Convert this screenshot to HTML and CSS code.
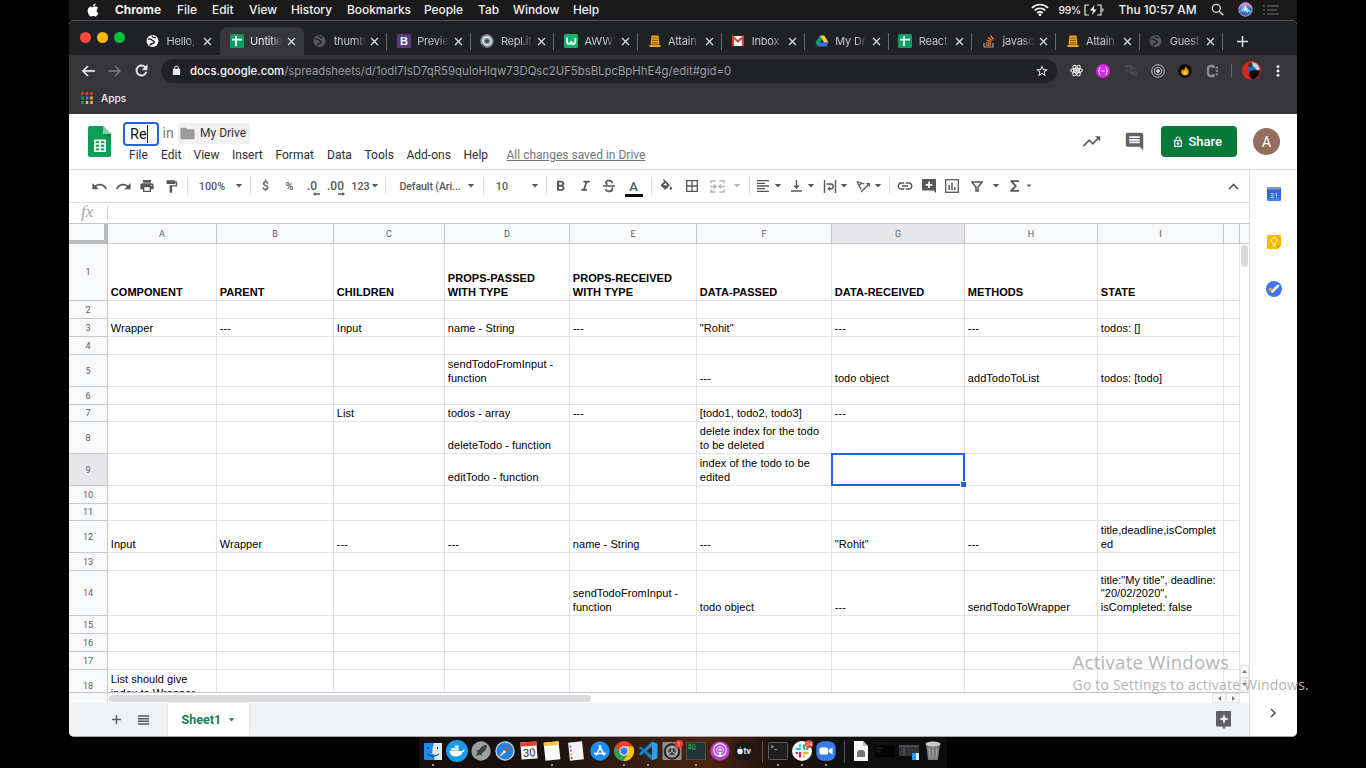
FILE: index.html
```html
<!DOCTYPE html>
<html lang="en">
<head>
<meta charset="utf-8">
<title>Untitled spreadsheet - Google Sheets</title>
<link rel="stylesheet" href="styles.css">
</head>
<body>
<svg class="defs" width="0" height="0">
  <symbol id="x" viewBox="0 0 10 10"><path d="M1.2 1.2l7.600 7.600M8.800 1.200l-7.600 7.600" stroke="currentColor" stroke-width="1.500" fill="none"/></symbol>
  <symbol id="dd" viewBox="0 0 8 4"><path d="M.8 0h6.4L4 3.6z" fill="currentColor"/></symbol>
  <symbol id="globe" viewBox="0 0 24 24"><circle cx="12" cy="12" r="11" fill="currentColor"/><path d="M4 9c4-2 6 0 8 2 3 1 4 3 2 5-2 1-5 1-7 4" stroke="#202124" stroke-width="2.800" fill="none"/><path d="M11 2c0 3 3 4 7 4" stroke="#202124" stroke-width="2.400" fill="none"/></symbol>
  <symbol id="sheet" viewBox="0 0 14 14"><rect width="14" height="14" rx="1.5" fill="#0f9d67"/><path d="M6 2v10M2 5.6h10" stroke="#fff" stroke-width="1.8"/></symbol>
  <symbol id="attain" viewBox="0 0 14 14"><path d="M3.500 1.500h7l1 9h-9z" fill="#f5a70c"/><path d="M1.500 12h11" stroke="#f5a70c" stroke-width="2"/><path d="M4.500 4h5M4.200 6.400h5.600M4 8.800h6" stroke="#6b4708" stroke-width=".9"/></symbol>
</svg>

<header class="macbar">
  <nav class="macmenu">
    <span><svg width="12" height="14" viewBox="1 0 22 24"><path fill="#fff" d="M12.152 6.896c-.948 0-2.415-1.078-3.96-1.04-2.04.027-3.91 1.183-4.961 3.014-2.117 3.675-.546 9.103 1.519 12.09 1.013 1.454 2.208 3.09 3.792 3.039 1.52-.065 2.09-.987 3.935-.987 1.831 0 2.35.987 3.96.948 1.637-.026 2.676-1.48 3.676-2.948 1.156-1.688 1.636-3.325 1.662-3.415-.039-.013-3.182-1.221-3.22-4.857-.026-3.04 2.48-4.494 2.597-4.559-1.429-2.09-3.623-2.324-4.39-2.376-2-.156-3.675 1.09-4.61 1.09zM15.53 3.83c.843-1.012 1.4-2.427 1.245-3.83-1.207.052-2.662.805-3.532 1.818-.78.896-1.454 2.338-1.273 3.714 1.338.104 2.715-.688 3.559-1.701"/></svg></span>
    <b>Chrome</b><span>File</span><span>Edit</span><span>View</span><span>History</span><span>Bookmarks</span><span>People</span><span>Tab</span><span>Window</span><span>Help</span>
    <span><svg width="18" height="13" viewBox="0 0 18 13" fill="none" stroke="#fff" stroke-width="1.7"><path d="M1 4.8c4.6-4.400 11.400-4.400 16 0M3.700 7.400c3-2.900 7.600-2.900 10.600 0M6.200 9.900c1.600-1.500 4-1.500 5.600 0"/><circle cx="9" cy="11.600" r=".6"/></svg></span>
    <span class="pct">99%</span>
    <span><svg width="20" height="12" viewBox="0 0 20 12" fill="none" stroke="#e6e6e6" stroke-width="1.200"><path d="M5 1H1v10h4M13 1h4v10h-4M18.800 4.500v3"/><path d="M10.500 1L6 6.600h3L8 11l4.500-5.600h-3z" fill="#fff" stroke="none"/></svg></span>
    <span class="clock">Thu 10:57 AM</span>
    <span><svg width="13" height="13" viewBox="0 0 13 13" fill="none" stroke="#e0e0e0" stroke-width="1.300"><circle cx="5.300" cy="5.300" r="4"/><path d="M8.300 8.300l4 4"/></svg></span>
    <span><svg width="15" height="15" viewBox="0 0 15 15"><circle cx="7.500" cy="7.500" r="7" fill="#3d64b8"/><path d="M1 7a6.500 6.500 0 0 1 13 0c-3-3-9-4-13 0" fill="#d77ac6"/><path d="M2 10c2-6 5-8 6-6s4 3 5 7c-3-2-8-3-11-1" fill="#5fd0ea"/><path d="M7.500 3l-2 8 2-3 3 4z" fill="#fff"/><circle cx="7.500" cy="7.500" r="6.700" fill="none" stroke="#b9bdd4" stroke-width=".7"/></svg></span>
    <span><svg width="16" height="10" viewBox="0 0 16 10" stroke="#737373" stroke-width="1.200"><path d="M0 1h2M4 1h12M0 5h2M4 5h10M0 9h2M4 9h12"/></svg></span>
  </nav>
</header>

<main class="window">
  <div class="tabstrip">
    <div class="lights"><i></i><i></i><i></i></div>
    <div class="tab nosep"><svg class="fav white"><use href="#globe"/></svg><span>Hello,</span><svg class="cl"><use href="#x"/></svg></div>
    <div class="tab active"><svg class="fav"><use href="#sheet"/></svg><span>Untitle</span><svg class="cl"><use href="#x"/></svg></div>
    <div class="tab"><svg class="fav dim"><use href="#globe"/></svg><span>thumb</span><svg class="cl"><use href="#x"/></svg></div>
    <div class="tab"><svg class="fav" viewBox="0 0 14 14"><rect width="14" height="14" rx="1.500" fill="#563d7c"/><text x="7" y="11" text-anchor="middle" font-size="11" font-weight="700" fill="#fff">B</text></svg><span>Previe</span><svg class="cl"><use href="#x"/></svg></div>
    <div class="tab"><svg class="fav" viewBox="0 0 14 14"><circle cx="7" cy="7" r="6.700" fill="#8b979e"/><circle cx="7" cy="7" r="4" fill="none" stroke="#eef2f4" stroke-width="1.300"/><circle cx="7" cy="7" r="1.800" fill="#354148"/><path d="M2 10l3 3M10 1l3 4" stroke="#414c53"/></svg><span>Repl.it</span><svg class="cl"><use href="#x"/></svg></div>
    <div class="tab"><svg class="fav" viewBox="0 0 14 14"><rect width="14" height="14" rx="1.500" fill="#12b26b"/><path d="M3 3.500v3.500q0 3 2 3t2.300-3q0 3 2 3t2-3.500V4" fill="none" stroke="#fff" stroke-width="1.900"/></svg><span>AWW</span><svg class="cl"><use href="#x"/></svg></div>
    <div class="tab"><svg class="fav"><use href="#attain"/></svg><span>Attain</span><svg class="cl"><use href="#x"/></svg></div>
    <div class="tab"><svg class="fav" viewBox="0 0 14 14"><rect x="1" y="2" width="12" height="10" rx="1" fill="#f4f4f4"/><path d="M2 12V3l5 4.500L12 3v9" fill="none" stroke="#dd3b2f" stroke-width="2"/></svg><span>Inbox</span><svg class="cl"><use href="#x"/></svg></div>
    <div class="tab"><svg class="fav" viewBox="0 0 14 14"><path d="M4.800 1.500h4.400l4.300 7H9z" fill="#ffcf48"/><path d="M4.800 1.500L.5 8.700l2.200 3.800L7 5z" fill="#12a261"/><path d="M4.900 8.500h8.600l-2.200 4H2.700z" fill="#3777e3"/></svg><span>My Dr</span><svg class="cl"><use href="#x"/></svg></div>
    <div class="tab"><svg class="fav"><use href="#sheet"/></svg><span>React</span><svg class="cl"><use href="#x"/></svg></div>
    <div class="tab"><svg class="fav" viewBox="0 0 14 14" fill="none"><path d="M2 9v4h9V9" stroke="#a4a6a8" stroke-width="1.200"/><path d="M4 11h5M4 8.700l5 .6M4.700 6.200l4.700 1.600M6 3.500l4.300 3M8.500 1.500l3 4" stroke="#ef7224" stroke-width="1.300"/></svg><span>javasc</span><svg class="cl"><use href="#x"/></svg></div>
    <div class="tab"><svg class="fav"><use href="#attain"/></svg><span>Attain</span><svg class="cl"><use href="#x"/></svg></div>
    <div class="tab"><svg class="fav dim"><use href="#globe"/></svg><span>Guest</span><svg class="cl"><use href="#x"/></svg></div>
    <svg class="newtab" width="11" height="11" viewBox="0 0 11 11"><path d="M5.500 0v11M0 5.500h11" stroke="#dfe1e4" stroke-width="1.500"/></svg>
  </div>

  <div class="navbar">
    <svg width="16" height="16" viewBox="0 0 24 24" fill="#eceef0"><path d="M22 11H6.830l5.590-5.590L11 4l-8 8 8 8 1.410-1.410L6.830 13H22v-2z" stroke="#eceef0" stroke-width=".6"/></svg>
    <svg width="16" height="16" viewBox="0 0 24 24" fill="#7d7f83"><path d="M2 11h15.170l-5.590-5.590L13 4l8 8-8 8-1.410-1.410L17.170 13H2z"/></svg>
    <svg width="17" height="17" viewBox="0 0 24 24" fill="#eceef0"><path stroke="#eceef0" stroke-width=".7" d="M17.650 6.350C16.200 4.900 14.210 4 12 4c-4.420 0-7.990 3.580-7.990 8s3.570 8 7.990 8c3.730 0 6.840-2.550 7.730-6h-2.080c-.82 2.330-3.040 4-5.650 4-3.310 0-6-2.690-6-6s2.690-6 6-6c1.660 0 3.140.69 4.220 1.780L13 11h7V4l-2.350 2.350z"/></svg>
    <div class="omnibox">
      <svg width="11" height="11" viewBox="0 0 24 24" fill="#e8eaed"><path d="M18 8h-1V6c0-2.760-2.240-5-5-5S7 3.240 7 6v2H6c-1.100 0-2 .9-2 2v10c0 1.100.9 2 2 2h12c1.100 0 2-.9 2-2V10c0-1.100-.9-2-2-2zm-9-2c0-1.660 1.340-3 3-3s3 1.340 3 3v2H9V6z"/></svg>
      <span class="url"><b>docs.google.com</b>/spreadsheets/d/1odI7IsD7qR59quIoHIqw73DQsc2UF5bsBLpcBpHhE4g/edit#gid=0</span>
      <svg width="14" height="14" viewBox="0 0 24 24" fill="#e8eaed"><path d="M22 9.240l-7.190-.62L12 2 9.190 8.630 2 9.240l5.460 4.730L5.820 21 12 17.270 18.180 21l-1.630-7.030L22 9.240zM12 15.400l-3.760 2.270 1-4.280-3.320-2.880 4.380-.38L12 6.100l1.710 4.040 4.380.38-3.320 2.880 1 4.280L12 15.400z"/></svg>
    </div>
    <div class="exts">
      <span><svg width="13" height="13" viewBox="0 0 14 14" fill="none" stroke="#eee" stroke-width="1.100"><ellipse cx="7" cy="7" rx="6.300" ry="2.500"/><ellipse cx="7" cy="7" rx="6.300" ry="2.500" transform="rotate(60 7 7)"/><ellipse cx="7" cy="7" rx="6.300" ry="2.500" transform="rotate(120 7 7)"/><circle cx="7" cy="7" r="1" fill="#fff"/></svg></span>
      <span><svg width="14" height="14" viewBox="0 0 14 14" fill="none" stroke="#fff"><circle cx="7" cy="7" r="7" fill="#d626e8" stroke="none"/><path d="M4.500 3.500q-1.500 0-1.200 2 0 1.500-1 1.500 1 0 1 1.500-.3 2 1.200 2M9.500 3.500q1.500 0 1.200 2 0 1.500 1 1.500-1 0-1 1.500.3 2-1.200 2M5.300 7h3.400"/></svg></span>
      <span><svg width="13" height="13" viewBox="0 0 13 13" fill="none" stroke="#4c4d50" stroke-width="1.300"><path d="M1 2h6v5H2zM4 4.500h6M5 9h5V5M8 8v3h4V8"/></svg></span>
      <span><svg width="14" height="14" viewBox="0 0 14 14" fill="none" stroke="#b6b7b9"><circle cx="7" cy="7" r="6.300"/><circle cx="7" cy="7" r="3.800"/><circle cx="7" cy="7" r="1.500" fill="#ddd"/></svg></span>
      <span><svg width="14" height="14" viewBox="0 0 14 14"><circle cx="7" cy="7" r="6.700" fill="#080808"/><path d="M7.500 2c.3 2 3.500 3 3.300 6.200-.2 2-1.800 3.300-3.800 3.300S3.200 10 3.200 8.200C3.200 6.500 4 6 4.500 5c.7.500.8 1 .9 1.500C6.500 5.500 7.500 4 7.500 2z" fill="#fb9700"/><circle cx="7.200" cy="9" r="1.800" fill="#ffd02e"/></svg></span>
      <span><svg width="13" height="14" viewBox="0 0 13 14" fill="none" stroke="#8a8b8e" stroke-width="2.300"><path d="M7.500 4V2H5Q2 2 2 5v4q0 3 3 3h2.500v-2"/><path d="M9.800 3.500h2.200M9.800 7h2.200M9.800 10.500h2.200" stroke-width="1.800"/></svg></span>
      <i class="vbar"></i>
      <span><svg width="19" height="19" viewBox="0 0 19 19"><circle cx="9.500" cy="9.500" r="9.500" fill="#d8281e"/><path d="M10 1l5 2 3 5-4 2-4-4z" fill="#b7d9ee"/><path d="M6 6l5-1 4 4-3 2-6-1z" fill="#2368b8"/><circle cx="8.500" cy="4" r="2.200" fill="#532a1e"/><path d="M8 10l5-1 5 1a9.500 9.500 0 0 1-8 8.500l-3-4z" fill="#050507"/></svg></span>
      <span><svg width="4" height="14" viewBox="0 0 4 14" fill="#fff"><circle cx="2" cy="2.700" r="1.400"/><circle cx="2" cy="7" r="1.400"/><circle cx="2" cy="11.300" r="1.400"/></svg></span>
    </div>
  </div>
  <div class="bookmarks">
    <svg width="12" height="12" viewBox="0 0 12 12"><path d="M1.500 0v3M6 0v3M10.500 0v3" stroke="#e33b2e" stroke-width="2.600"/><path d="M1.500 4.500v3" stroke="#1e9e5a" stroke-width="2.600"/><path d="M6 4.500v3" stroke="#3b7de9" stroke-width="2.600"/><path d="M10.500 4.500v3M6 9v3M10.500 9v3" stroke="#f2b632" stroke-width="2.600"/><path d="M1.500 9v3" stroke="#1e9e5a" stroke-width="2.600"/></svg>
    <span>Apps</span>
  </div>

  <section class="head">
    <svg class="logo" width="23" height="31" viewBox="0 0 23 31"><path d="M2 0h13l8 8v21q0 2-2 2H2q-2 0-2-2V2q0-2 2-2z" fill="#0f9d58"/><path d="M15 0l8 8h-8z" fill="#87ceac"/><path d="M15 8h8v6z" fill="#0b8a4c"/><path d="M6 13.500h12v12.500H6zM7.800 15.200v1.900h3.300v-1.900zM12.900 15.200v1.900h3.300v-1.900zM7.800 18.800v1.900h3.300v-1.900zM12.900 18.800v1.900h3.300v-1.900zM7.800 22.400v1.900h3.300v-1.900zM12.900 22.400v1.900h3.300v-1.900z" fill="#f1f1f1" fill-rule="evenodd"/></svg>
    <div class="doc">
      <div class="titlerow"><span class="rename">Re<i></i></span><span class="in">in</span><span class="chip"><svg width="17" height="17" viewBox="0 0 24 24" fill="#9a9b9d"><path d="M10 4H4c-1.100 0-2 .9-2 2v12c0 1.100.9 2 2 2h16c1.100 0 2-.9 2-2V8c0-1.100-.9-2-2-2h-8l-2-2z"/></svg>My Drive</span></div>
      <nav class="menus"><span>File</span><span>Edit</span><span>View</span><span>Insert</span><span>Format</span><span>Data</span><span>Tools</span><span>Add-ons</span><span>Help</span><u>All changes saved in Drive</u></nav>
    </div>
    <div class="actions">
      <svg width="21" height="21" viewBox="0 0 24 24" fill="#5f6368"><path d="M16 6l2.290 2.290-4.880 4.880-4-4L2 16.590 3.410 18l6-6 4 4 6.300-6.290L22 12V6z"/></svg>
      <svg width="21" height="21" viewBox="0 0 24 24" fill="#5f6368"><path d="M21.990 4c0-1.100-.89-2-1.990-2H4c-1.100 0-2 .9-2 2v12c0 1.100.9 2 2 2h14l4 4-.01-18zM18 14H6v-2h12v2zm0-3H6V9h12v2zm0-3H6V6h12v2z"/></svg>
      <div class="share"><svg width="12" height="12" viewBox="0 0 24 24" fill="#fff"><path fill-rule="evenodd" d="M18 8h-1V6c0-2.760-2.240-5-5-5S7 3.240 7 6v2H6c-1.100 0-2 .9-2 2v10c0 1.100.9 2 2 2h12c1.100 0 2-.9 2-2V10c0-1.100-.9-2-2-2zM9 6c0-1.660 1.340-3 3-3s3 1.340 3 3v2H9V6zM6.500 10.500h11v9h-11z"/><circle cx="12" cy="15" r="2.600"/></svg>Share</div>
      <div class="avatar">A</div>
    </div>
  </section>

  <section class="body">
    <div class="left">
      <div class="tools">
        <span><svg width="17" height="17" viewBox="0 0 24 24"><path d="M12.500 8c-2.650 0-5.050.99-6.900 2.600L2 7v9h9l-3.620-3.620c1.390-1.160 3.160-1.880 5.120-1.880 3.540 0 6.550 2.310 7.600 5.500l2.370-.78C21.080 11.030 17.150 8 12.500 8z"/></svg></span>
        <span><svg width="17" height="17" viewBox="0 0 24 24"><path d="M18.400 10.600C16.550 8.990 14.150 8 11.500 8c-4.650 0-8.580 3.030-9.960 7.220L3.900 16c1.050-3.190 4.050-5.500 7.600-5.500 1.950 0 3.730.72 5.120 1.880L13 16h9V7l-3.600 3.600z"/></svg></span>
        <span><svg width="16" height="16" viewBox="0 0 24 24"><path d="M19 8H5c-1.660 0-3 1.340-3 3v6h4v4h12v-4h4v-6c0-1.660-1.340-3-3-3zm-3 11H8v-5h8v5zm3-7c-.55 0-1-.45-1-1s.45-1 1-1 1 .45 1 1-.45 1-1 1zm-1-9H6v4h12V3z"/></svg></span>
        <span><svg width="15" height="15" viewBox="0 0 24 24"><path d="M18 4V3c0-.55-.45-1-1-1H5c-.55 0-1 .45-1 1v4c0 .55.45 1 1 1h12c.55 0 1-.45 1-1V6h1v4H9v11c0 .55.45 1 1 1h2c.55 0 1-.45 1-1v-9h8V4h-3z"/></svg></span>
        <i class="sep"></i>
        <span>100%</span>
        <span><svg class="dd"><use href="#dd"/></svg></span>
        <i class="sep"></i>
        <span class="cur">$</span>
        <span>%</span>
        <span class="dec">.0<svg width="7" height="4" viewBox="0 0 7 4"><path d="M0 2l2.500-2v1.300H7v1.400H2.500V4z"/></svg></span>
        <span class="dec">.00<svg width="7" height="4" viewBox="0 0 7 4"><path d="M7 2L4.500 0v1.300H0v1.400h4.500V4z"/></svg></span>
        <span class="big">123<svg class="dd"><use href="#dd"/></svg></span>
        <i class="sep"></i>
        <span class="font">Default (Ari...</span>
        <span><svg class="dd"><use href="#dd"/></svg></span>
        <i class="sep"></i>
        <span>10</span>
        <span><svg class="dd"><use href="#dd"/></svg></span>
        <i class="sep"></i>
        <span><svg width="17" height="17" viewBox="0 0 24 24"><path d="M15.600 10.790c.97-.67 1.650-1.770 1.650-2.790 0-2.260-1.750-4-4-4H7v14h7.040c2.090 0 3.710-1.700 3.710-3.790 0-1.520-.86-2.820-2.150-3.420zM10 6.500h3c.83 0 1.500.67 1.500 1.500s-.67 1.500-1.500 1.500h-3v-3zm3.500 9H10v-3h3.500c.83 0 1.500.67 1.500 1.500s-.67 1.500-1.500 1.500z"/></svg></span>
        <span><svg width="17" height="17" viewBox="0 0 24 24"><path d="M9 4v2.500h3l-3.300 9H6V18h8v-2.500h-2.700l3.300-9H18V4z"/></svg></span>
        <span><svg width="16" height="16" viewBox="0 0 24 24" fill="none" stroke="#55585c"><path d="M3 12h18" stroke-width="2"/><path d="M17 8q0-4-5-4-4.500 0-4.500 3.200 0 2 2.500 2.800M7 16.500q.5 3.500 5.200 3.500 4.800 0 4.800-3.500 0-1.200-.8-2" stroke-width="2.600"/></svg></span>
        <span class="fc">A</span>
        <i class="sep"></i>
        <span><svg width="15" height="15" viewBox="0 0 24 24"><path d="M16.560 8.940L7.620 0 6.210 1.410l2.380 2.380-5.150 5.150c-.59.59-.59 1.540 0 2.120l5.500 5.500c.29.290.68.440 1.060.440s.77-.15 1.060-.44l5.500-5.500c.59-.58.59-1.530 0-2.120zM7 10L10 6.500 13.500 10H7zM19 11.500s-2 2.170-2 3.500c0 1.100.9 2 2 2s2-.9 2-2c0-1.330-2-3.500-2-3.500z"/></svg></span>
        <span><svg width="16" height="16" viewBox="0 0 24 24"><path d="M3 3v18h18V3H3zm8 16H5v-6h6v6zm0-8H5V5h6v6zm8 8h-6v-6h6v6zm0-8h-6V5h6v6z"/></svg></span>
        <span class="off"><svg width="15" height="13" viewBox="0 0 15 13" fill="none" stroke="#b4b6b8" stroke-width="1.500"><path d="M5.500 1H1v2.500M9.500 1H14v2.500M1 9.500V12h4.500M14 9.500V12H9.500M0 6.500h5M15 6.500h-5M4 4.500l2 2-2 2M11 4.500l-2 2 2 2"/></svg></span>
        <span class="off"><svg class="dd"><use href="#dd"/></svg></span>
        <i class="sep"></i>
        <span><svg width="16" height="16" viewBox="0 0 24 24"><path d="M15 15H3v2h12v-2zm0-8H3v2h12V7zM3 13h18v-2H3v2zm0 8h18v-2H3v2zM3 3v2h18V3H3z"/></svg></span>
        <span><svg class="dd"><use href="#dd"/></svg></span>
        <span><svg width="11" height="12" viewBox="0 0 11 12"><path d="M4.800 0h1.400v5.500h2.500L5.500 9 2.300 5.500h2.500zM0 10.200h11v1.500H0z"/></svg></span>
        <span><svg class="dd"><use href="#dd"/></svg></span>
        <span><svg width="14" height="13" viewBox="0 0 14 13" fill="none" stroke="#55585c" stroke-width="1.400"><path d="M1.500 0v13M12.500 0v13M3.500 4h4.300a2.300 2.300 0 0 1 0 4.800H6"/><path d="M7 6.500v4.600L4.200 8.800z" fill="#55585c" stroke="none"/></svg></span>
        <span><svg class="dd"><use href="#dd"/></svg></span>
        <span><svg width="15" height="13" viewBox="0 0 15 13" fill="none" stroke="#55585c" stroke-width="1.300"><path d="M1 1.500l4 8M1 1.500l7.500 2.500M3 5.800l3-3M5 12l7.500-7.500"/><path d="M9.800 3h4v4z" fill="#55585c" stroke="none"/></svg></span>
        <span><svg class="dd"><use href="#dd"/></svg></span>
        <i class="sep"></i>
        <span><svg width="18" height="18" viewBox="0 0 24 24"><path d="M3.900 12c0-1.710 1.390-3.100 3.100-3.100h4V7H7c-2.760 0-5 2.240-5 5s2.240 5 5 5h4v-1.900H7c-1.710 0-3.100-1.390-3.100-3.100zM8 13h8v-2H8v2zm9-6h-4v1.900h4c1.710 0 3.100 1.390 3.100 3.100s-1.390 3.100-3.100 3.100h-4V17h4c2.760 0 5-2.240 5-5s-2.240-5-5-5z"/></svg></span>
        <span><svg width="14" height="14" viewBox="0 0 14 14"><path d="M0 0h14v14l-2.500-2.500H0z"/><path d="M7 2.500v6.600M3.700 5.800h6.600" stroke="#fff" stroke-width="1.700"/></svg></span>
        <span><svg width="14" height="14" viewBox="0 0 14 14" fill="none" stroke="#55585c" stroke-width="1.300"><rect x=".7" y=".7" width="12.600" height="12.600"/><path d="M4.200 6v5M7 3.500V11M9.800 8v3" stroke-width="1.500"/></svg></span>
        <span><svg width="12" height="11" viewBox="0 0 12 11" fill="none" stroke="#55585c" stroke-width="1.500"><path d="M.8 1h10.400L7 6.200V10H5V6.200z"/></svg></span>
        <span><svg class="dd"><use href="#dd"/></svg></span>
        <span><svg width="16" height="16" viewBox="0 0 24 24"><path d="M18 3.500H5v2l6.500 6.500L5 18.500v2h13V18H9.500l5.500-6-5.500-6H18z"/></svg></span>
        <span><svg class="dd sm"><use href="#dd"/></svg></span>
        <span><svg width="11" height="7" viewBox="0 0 11 7"><path d="M1 6l4.500-4.500L10 6" fill="none" stroke="#55585c" stroke-width="1.700"/></svg></span>
      </div>
      <div class="formula"><span>fx</span></div>
      <div class="gridarea">
        <div class="sheet">
          <table>
            <colgroup><col class="c0"><col class="ca"><col class="cb"><col class="cc"><col class="cd"><col class="ce"><col class="cf"><col class="cg"><col class="ch"><col class="ci"><col class="cj"></colgroup>
            <thead><tr><th class="corner"></th><th>A</th><th>B</th><th>C</th><th>D</th><th>E</th><th>F</th><th class="hot">G</th><th>H</th><th>I</th><th></th></tr></thead>
            <tbody>
              <tr class="h57 titles"><th>1</th><td>COMPONENT</td><td>PARENT</td><td>CHILDREN</td><td>PROPS-PASSED<br>WITH TYPE</td><td>PROPS-RECEIVED<br>WITH TYPE</td><td>DATA-PASSED</td><td>DATA-RECEIVED</td><td>METHODS</td><td>STATE</td><td></td></tr>
              <tr class="h18"><th>2</th><td></td><td></td><td></td><td></td><td></td><td></td><td></td><td></td><td></td><td></td></tr>
              <tr class="h18"><th>3</th><td>Wrapper</td><td>---</td><td>Input</td><td>name - String</td><td>---</td><td>"Rohit"</td><td>---</td><td>---</td><td>todos: []</td><td></td></tr>
              <tr class="h18"><th>4</th><td></td><td></td><td></td><td></td><td></td><td></td><td></td><td></td><td></td><td></td></tr>
              <tr class="h32"><th>5</th><td></td><td></td><td></td><td>sendTodoFromInput -<br>function</td><td></td><td>---</td><td>todo object</td><td>addTodoToList</td><td>todos: [todo]</td><td></td></tr>
              <tr class="h18"><th>6</th><td></td><td></td><td></td><td></td><td></td><td></td><td></td><td></td><td></td><td></td></tr>
              <tr class="h17"><th>7</th><td></td><td></td><td>List</td><td>todos - array</td><td>---</td><td>[todo1, todo2, todo3]</td><td>---</td><td></td><td></td><td></td></tr>
              <tr class="h32"><th>8</th><td></td><td></td><td></td><td>deleteTodo - function</td><td></td><td>delete index for the todo<br>to be deleted</td><td></td><td></td><td></td><td></td></tr>
              <tr class="h32"><th class="hot">9</th><td></td><td></td><td></td><td>editTodo - function</td><td></td><td>index of the todo to be<br>edited</td><td class="selected"></td><td></td><td></td><td></td></tr>
              <tr class="h18"><th>10</th><td></td><td></td><td></td><td></td><td></td><td></td><td></td><td></td><td></td><td></td></tr>
              <tr class="h17"><th>11</th><td></td><td></td><td></td><td></td><td></td><td></td><td></td><td></td><td></td><td></td></tr>
              <tr class="h32"><th>12</th><td>Input</td><td>Wrapper</td><td>---</td><td>---</td><td>name - String</td><td>---</td><td>"Rohit"</td><td>---</td><td>title,deadline,isComplet<br>ed</td><td></td></tr>
              <tr class="h18"><th>13</th><td></td><td></td><td></td><td></td><td></td><td></td><td></td><td></td><td></td><td></td></tr>
              <tr class="h45"><th>14</th><td></td><td></td><td></td><td></td><td>sendTodoFromInput -<br>function</td><td>todo object</td><td>---</td><td>sendTodoToWrapper</td><td>title:"My title", deadline:<br>"20/02/2020",<br>isCompleted: false</td><td></td></tr>
              <tr class="h18"><th>15</th><td></td><td></td><td></td><td></td><td></td><td></td><td></td><td></td><td></td><td></td></tr>
              <tr class="h18"><th>16</th><td></td><td></td><td></td><td></td><td></td><td></td><td></td><td></td><td></td><td></td></tr>
              <tr class="h18"><th>17</th><td></td><td></td><td></td><td></td><td></td><td></td><td></td><td></td><td></td><td></td></tr>
              <tr class="h32"><th>18</th><td>List should give<br>index to Wrapper</td><td></td><td></td><td></td><td></td><td></td><td></td><td></td><td></td><td></td></tr>
            </tbody>
          </table>
        </div>
        <div class="vscroll"><i class="vhead"></i><i class="vthumb"></i><span class="arrow"><svg width="5" height="3" viewBox="0 0 5 3"><path d="M0 3L2.500 0 5 3z"/></svg></span><span class="arrow"><svg width="5" height="3" viewBox="0 0 5 3"><path d="M0 0h5L2.500 3z"/></svg></span></div>
      </div>
      <div class="hscroll"><i class="gut"></i><i class="hthumb"></i><span class="arrow"><svg width="3" height="5" viewBox="0 0 3 5"><path d="M3 0v5L0 2.500z"/></svg></span><span class="arrow"><svg width="3" height="5" viewBox="0 0 3 5"><path d="M0 0v5l3-2.500z"/></svg></span></div>
      <footer class="sheets">
        <svg width="11" height="11" viewBox="0 0 11 11"><path d="M5.500 1v9M1 5.500h9" stroke="#55585c" stroke-width="1.500"/></svg>
        <svg width="11" height="10" viewBox="0 0 11 10"><path d="M0 1h11M0 3.700h11M0 6.300h11M0 9h11" stroke="#55585c" stroke-width="1.400"/></svg>
        <div class="stab">Sheet1<svg class="dd"><use href="#dd"/></svg></div>
        <svg class="explore" width="16" height="18" viewBox="0 0 16 18"><path d="M1 0h14v15.500h-5L8 18l-2-2.500H1Q0 15 0 14V1q0-1 1-1z" fill="#5f6164"/><path d="M8 3l1.200 3.800L13 8l-3.800 1.200L8 13 6.800 9.200 3 8l3.800-1.200z" fill="#fff"/></svg>
      </footer>
    </div>
    <aside class="side">
      <svg width="14" height="15" viewBox="0 0 14 15"><rect width="14" height="14" rx="1" fill="#4285f4"/><rect x="1" width="12" height="3.500" fill="#8b95b5"/><rect y="2.500" width="14" height="9" fill="#3367d6"/><text x="7" y="10.500" text-anchor="middle" font-size="7.500" fill="#dfe8fb">31</text></svg>
      <svg width="14" height="14" viewBox="0 0 14 14"><path d="M1 0h12q1 0 1 1v9.500L10.500 14H1q-1 0-1-1V1q0-1 1-1z" fill="#fbb90a"/><path d="M14 10.500h-3.500V14z" fill="#e0930b"/><path d="M5.800 9V7.800a2.700 2.700 0 1 1 2.600 0V9zM5.600 10.700h3" fill="none" stroke="#fff3cd"/></svg>
      <svg width="16" height="16" viewBox="0 0 16 16"><circle cx="8" cy="8" r="8" fill="#4076ea"/><path d="M6.300 10.500l5.700-5.700" stroke="#fff" stroke-width="2.600" stroke-linecap="round"/><circle cx="4.300" cy="8.300" r="1.500" fill="#f6b62b"/></svg>
      <svg class="expand" width="7" height="10" viewBox="0 0 7 10"><path d="M1 1l4 4-4 4" stroke="#55585c" stroke-width="1.600" fill="none"/></svg>
    </aside>
  </section>
</main>

<footer class="dockwrap">
  <div class="dock">
    <span class="on"><svg viewBox="0 0 20 20"><rect x="1" y="2" width="18" height="17" rx="1" fill="#1f8df0"/><path d="M11 2h8v17h-7q-1-3-1-6H9q0-6 2-11z" fill="#dfe9f2"/><path d="M5 6v2M14.500 6v2M4 13q6 4.500 12 0" stroke="#12395e" fill="none"/></svg></span>
    <span><svg class="lg" viewBox="0 0 20 20"><circle cx="10" cy="10" r="10" fill="#189be8"/><path d="M3 10h12q1-2 2-1-.5 2-2 2-1 4-6 4t-6-5zM4.500 7.500h7V9.500h-7zM8 5h3.500v2H8z" fill="#fff"/></svg></span>
    <span><svg viewBox="0 0 20 20"><circle cx="10" cy="10" r="9.700" fill="#9c9fa2"/><path d="M16 4q-5 0-8 5l-3 .5 1.500 1.500-1.500 4 4-1.500 1.500 1.500.5-3q5-3 5-8z" fill="#3b3f43"/></svg></span>
    <span><svg viewBox="0 0 20 20"><circle cx="10" cy="10" r="9.700" fill="#d5dbe1"/><circle cx="10" cy="10" r="8.500" fill="#2384df"/><path d="M16 4l-5 7-2-2z" fill="#f0403a"/><path d="M4 16l5-7 2 2z" fill="#fff"/></svg></span>
    <span><svg viewBox="0 0 20 20"><g transform="rotate(-4 10 10)"><rect x="2" y="1" width="16" height="17" fill="#f5f5f5"/><path d="M2 1h16v4H2z" fill="#e2402f"/><text x="10" y="15.500" text-anchor="middle" font-size="11" fill="#333">30</text></g></svg></span>
    <span class="on"><svg viewBox="0 0 20 20"><g transform="rotate(-6 10 10)"><rect x="2.500" y="1" width="15" height="18" fill="#fafafa"/><path d="M2.500 1h15v3.500h-15z" fill="#f5ca3a"/></g></svg></span>
    <span><svg viewBox="0 0 20 20"><g transform="rotate(-6 10 10)"><rect x="3" y="1" width="14" height="18" fill="#f5f5f5"/><circle cx="5" cy="5" r="1" fill="#2e7be5"/><circle cx="5" cy="9" r="1" fill="#e33"/><circle cx="5" cy="13" r="1" fill="#e8a820"/><circle cx="5" cy="16.500" r="1" fill="#555"/></g></svg></span>
    <span><svg viewBox="0 0 20 20"><circle cx="10" cy="10" r="9.700" fill="#1f8cf0"/><path d="M11 4.500L6 14.500M9 4.500l5.500 10M4 12.500h12" stroke="#fff" stroke-width="1.600"/></svg></span>
    <span class="on"><svg viewBox="0 0 20 20"><circle cx="10" cy="10" r="10" fill="#e34133"/><path d="M1.300 5A10 10 0 0 0 9.500 20l4.800-7.500L5.700 12.500z" fill="#2ca24c"/><path d="M10 5.500h9a10 10 0 0 1-9.500 14.500l4.500-7.500z" fill="#fbc116"/><circle cx="10" cy="10" r="4.700" fill="#fff"/><circle cx="10" cy="10" r="3.700" fill="#3f7ee8"/></svg></span>
    <span class="on"><svg viewBox="0 0 20 20"><path d="M14 .5l5.500 2.300v14.400L14 19.500z" fill="#2a9fe8"/><path d="M14 .5v5.300L2.500 14.500.8 13z" fill="#1d8ad6"/><path d="M14 19.500v-5.300L2.500 5.500.8 7z" fill="#1779c4"/></svg></span>
    <span><svg viewBox="0 0 20 20"><rect x=".5" y="1" width="19" height="18" rx="1" fill="#8d8f91"/><circle cx="10" cy="10.500" r="7.300" fill="none" stroke="#232426" stroke-width="2"/><circle cx="10" cy="10.500" r="4.300" fill="#3a3c3e" stroke="#bbb"/><path d="M10 10.500V5M10 10.500l5 3M10 10.500l-5 3" stroke="#bbb"/></svg><em>1</em></span>
    <span class="on"><svg viewBox="0 0 20 20"><rect x=".5" y="1.500" width="19" height="17" fill="#22333a" stroke="#4d4f50"/><text x="2" y="8" font-size="6.500" font-weight="700" fill="#25c04c">$▯</text></svg></span>
    <span><svg viewBox="0 0 20 20"><circle cx="10" cy="10" r="9.700" fill="#b93ad6"/><circle cx="10" cy="9" r="6.300" fill="none" stroke="#fff" stroke-width="1.200"/><circle cx="10" cy="9" r="3.500" fill="none" stroke="#fff"/><circle cx="10" cy="8.700" r="1.600" fill="#fff"/><path d="M10 11v5" stroke="#fff" stroke-width="2.300"/></svg></span>
    <span><svg viewBox="0 0 20 20"><rect x="1" y="1" width="18" height="18" rx="6" fill="#171819"/><path d="M5.500 8q3-1 3 1 0 1 .6 1.500-1 3-2.300 2.700-.8-.3-1.600 0C3.500 13.200 2.500 9 4 8q.7-.4 1.500 0zM5.500 7.500q0-1.500 1.500-2 0 1.600-1.500 2z" fill="#eee"/><text x="9.500" y="13" font-size="8.500" font-weight="700" fill="#eee">tv</text></svg></span>
    <i class="dsep"></i>
    <span class="on"><svg viewBox="0 0 20 20"><rect x=".5" y="1.500" width="19" height="17" rx="1" fill="#1e1e20" stroke="#5b5b5c"/><text x="2.500" y="8" font-size="6.500" fill="#ddd">&gt;_</text></svg></span>
    <span class="on"><svg viewBox="0 0 20 20"><circle cx="10" cy="10" r="10" fill="#fff"/><g stroke-width="2.300" stroke-linecap="round"><path d="M4.500 8H8" stroke="#36c5f0"/><path d="M8 4.500v1" stroke="#36c5f0"/><path d="M12 4.500V8" stroke="#2eb67d"/><path d="M15 8h.5" stroke="#2eb67d"/><path d="M12 12h3.500" stroke="#ecb22e"/><path d="M12 15.300v.2" stroke="#ecb22e"/><path d="M8 12v3.500" stroke="#e01e5a"/><path d="M4.500 12H5" stroke="#e01e5a"/></g></svg><em>24</em></span>
    <span class="on"><svg viewBox="0 0 20 20"><rect x=".3" y=".3" width="19.400" height="19.400" rx="7" fill="#3a7cf0"/><rect x="3.500" y="6.500" width="8.500" height="7" rx="1.500" fill="#fff"/><path d="M12.500 9l4-2.500v7l-4-2.500z" fill="#fff"/></svg></span>
    <i class="dsep"></i>
    <span><svg viewBox="0 0 20 20"><path d="M3 0h9l5 5v15H3z" fill="#f7f7f7"/><path d="M12 0v5h5z" fill="#bbb"/><path d="M6 11l2-2h4l2 2v5H6z" fill="#73767a"/></svg></span>
    <span><svg viewBox="0 0 20 20"><rect x="0" y="5" width="20" height="11" fill="#030303"/><path d="M1 7h7M1 10h5" stroke="#2c2c2c"/></svg></span>
    <span><svg viewBox="0 0 20 20"><rect x="0" y="4" width="20" height="11" fill="#343538"/><path d="M0 5h20M5 5v10" stroke="#5e6063"/><rect x="13" y="12" width="7" height="7" fill="#2998ee"/><rect x="17" y="12" width="3" height="7" fill="#e2edf5"/></svg></span>
    <span><svg viewBox="0 0 20 20"><path d="M3 2h14l-2 17H5z" fill="#77797b"/><ellipse cx="10" cy="3" rx="7.500" ry="2.500" fill="#c9cacb"/><path d="M6 7l1 10M10 7v10M14 7l-1 10" stroke="#a5a7a9"/></svg></span>
  </div>
</footer>

<div class="watermark"><p>Activate Windows</p><p>Go to Settings to activate Windows.</p></div>
</body>
</html>
```
FILE: styles.css
```css
* { box-sizing: border-box; }
body {
  margin: 0;
  width: 1366px;
  height: 768px;
  overflow: hidden;
  background: #000;
  padding: 0 69px;
  font-family: Roboto, "Liberation Sans", sans-serif;
  color: #202124;
}
svg { flex: none; display: block; }
.defs { position: absolute; }

/* Zero-width items sit on grid lines and spread evenly round them */
.macmenu, .exts, .tools, .menus, .dock { display: grid; align-items: center; }
.macmenu > *, .exts > span, .tools > span, .menus > *, .dock > span {
  width: 0;
  display: flex;
  align-items: center;
  justify-content: center;
  white-space: nowrap;
}

.macbar { width: 1228px; height: 20px; background: #1b1a1b; font: 500 11.900px Inter, sans-serif; color: #f2f2f2; }
.macmenu {
  height: 19px;
  padding-left: 23.500px;
  grid-template-columns: 22.500px 62px 35px 37px 42px 56px 77px 54px 35px 60px 467px 18.500px 35px 25px 99px 28px 25px 0;
}
.macmenu > b, .macmenu > span { justify-content: flex-start; }
.macmenu > span:first-child, .macmenu > span:nth-child(12), .macmenu > span:nth-child(14), .macmenu > span:nth-child(n+16) { justify-content: center; }
.macmenu > b { font-weight: 700; }
.macmenu .pct { font-size: 10.300px; letter-spacing: -.3px; }

.window {
  width: 1228px;
  height: 717px;
  border-radius: 5px;
  overflow: hidden;
  background: #fff;
  border-bottom: 1px solid #a9a9ab;
  display: flex;
  flex-direction: column;
}
.tabstrip {
  height: 35px;
  flex: none;
  background: #202124;
  border-top: 1px solid #515255;
  display: flex;
  align-items: flex-end;
  font: 400 11px Inter, sans-serif;
  letter-spacing: -.2px;
  color: #c4c6c9;
}
.lights { width: 67.5px; height: 34px; display: flex; gap: 6px; padding: 11px 0 0 10.5px; flex: none; }
.lights i { width: 11px; height: 11px; border-radius: 50%; background: #ff4a3d; }
.lights i:nth-child(2) { background: #ffb900; }
.lights i:nth-child(3) { background: #06c13e; }
.tab { width: 83.6px; height: 28px; flex: none; display: flex; align-items: center; padding-left: 9.5px; border-radius: 7px 7px 0 0; background: linear-gradient(#6a6b6e, #6a6b6e) 100% 50% / 1px 17px no-repeat; }
.tab.nosep { background: none; }
.tab.active { background: #36373a; color: #e1e3e6; }
.fav { width: 14px; height: 14px; font-family: "Liberation Sans", sans-serif; letter-spacing: 0; }
.fav.white { color: #fff; width: 13px; margin-right: 1px; }
.fav.dim { color: #57595c; width: 13px; margin-right: 1px; }
.tab > span {
  width: 35px;
  margin-left: 6.5px;
  white-space: nowrap;
  -webkit-mask-image: linear-gradient(90deg, #000 58%, rgba(0, 0, 0, .15) 86%);
  mask-image: linear-gradient(90deg, #000 58%, rgba(0, 0, 0, .15) 86%);
}
.cl { width: 9px; height: 9px; margin-left: 1.5px; color: #d6d8da; }
.newtab { margin: 0 0 8px 14px; }

.navbar { height: 31px; flex: none; background: #36363a; display: flex; align-items: center; padding-left: 11px; gap: 11px; }
.navbar > svg:nth-child(3) { margin-left: -1px; }
.omnibox { width: 896px; height: 24px; border-radius: 12px; background: #202124; display: flex; align-items: center; padding: 0 8px 0 10px; gap: 8px; }
.navbar .omnibox { margin-left: 0; flex: none; }
.url { flex: 1; font: 400 11.350px Inter, sans-serif; color: #9b9da1; white-space: nowrap; }
.url b { font-weight: 500; color: #fff; }
.exts { margin-left: 8px; grid-template-columns: 27px 28px 27px 27px 27px 19px 20px 27px 0; }
.vbar { width: 1px; height: 13px; background: #68696c; }

.bookmarks { height: 28px; flex: none; background: #36363a; display: flex; align-items: center; padding: 0 0 4px 12px; gap: 8px; font: 500 10.200px Inter, sans-serif; color: #ececee; }

.head { height: 56px; flex: none; display: flex; border-bottom: 1px solid #dadcde; padding-left: 19px; }
.logo { margin-top: 12px; }
.doc { margin-left: 12px; padding-top: 8px; width: 960px; }
.titlerow { display: flex; align-items: center; height: 24px; }
.rename { width: 36px; height: 24px; border: 2px solid #2565d8; border-radius: 4px; font-size: 14.5px; padding-left: 5.500px; margin-left: -.5px; display: flex; align-items: center; color: #111; }
.rename i { width: 1px; height: 18px; background: #222; }
.in { font-size: 14px; color: #777a7e; margin: 0 4px 2px 4px; width: 11.500px; }
.chip { background: #f1f1f1; height: 21px; width: 72px; display: flex; align-items: center; gap: 4px; padding-left: 1px; border-radius: 3px; font-size: 12px; color: #333; white-space: nowrap; margin-bottom: 2px; }
.menus { height: 18px; font-size: 12px; color: #2c2e31; padding-left: 6px; grid-template-columns: 32px 32.5px 38.5px 43.5px 51.5px 37.5px 42px 57px 43px 0; }
.menus > * { justify-content: flex-start; }
.menus u { color: #73767a; }
.actions { flex: 1; display: flex; align-items: center; margin-left: -2.500px; }
.actions > svg + svg { margin-left: 22px; }
.share { width: 76px; height: 31px; margin-left: 16px; flex: none; border-radius: 4px; background: #06793b; color: #fff; font-size: 13px; font-weight: 500; display: flex; align-items: center; gap: 5px; padding-left: 11px; }
.avatar { width: 27px; height: 27px; border-radius: 50%; background: #966e60; color: #fff; font-size: 14px; display: flex; align-items: center; justify-content: center; margin-left: 16.500px; flex: none; }

.body { flex: 1; display: flex; min-height: 0; }
.left { width: 1180px; display: flex; flex-direction: column; }
.tools {
  height: 33px;
  flex: none;
  padding-left: 30px;
  border-bottom: 1px solid #dcdddf;
  font-size: 10.800px;
  font-weight: 500;
  color: #55585c;
  fill: #55585c;
  grid-template-columns: 24px 24px 24px 16px 25px 27px 11px 15.500px 24px 22.500px 23.500px 29.500px 20px 45px 41px 11.500px 19.500px 33px 11px 14.500px 24.500px 23.500px 25px 17px 16px 25.500px 25.500px 19px 12px 14.500px 14.500px 18.500px 14.500px 19px 14.500px 19.500px 14px 11.500px 15.500px 24px 23.500px 25px 18.500px 19px 14.500px 204px 0;
}
.sep { width: 1px; height: 17px; background: #dcdddf; }
.dd { width: 8px; height: 4px; color: #55585c; }
.dd.sm { width: 6px; height: 4px; }
.off .dd { color: #b4b6b8; }
.cur { font-size: 12px; }
.font { font-size: 10.600px; letter-spacing: -.1px; }
.dec { position: relative; font-size: 12px; }
.dec svg { position: absolute; top: 13px; left: 1px; }
.dec + .dec svg { left: 2px; }
.big .dd { margin-left: 1px; }
.fc { font-size: 13px; position: relative; }
.fc::after { content: ""; position: absolute; width: 18px; height: 3px; background: #000; top: 15px; left: -9px; }

.formula { height: 20px; flex: none; display: flex; align-items: center; }
.formula span { width: 39px; height: 14px; border-right: 1px solid #cfcfcf; font: italic 17px/12px "Liberation Serif", serif; color: #a5a6a8; padding-left: 12px; }

.gridarea { height: 470px; flex: none; display: flex; border-top: 1px solid #c4c5c7; border-bottom: 1px solid #c6c7c9; }
.sheet { width: 1171px; overflow: hidden; }
table { table-layout: fixed; width: 1171px; border-collapse: separate; border-spacing: 0; }
.c0 { width: 39px; } .ca { width: 109px; } .cb { width: 117px; } .cc { width: 111px; } .cd { width: 125px; }
.ce { width: 127px; } .cf { width: 135px; } .cg { width: 133px; } .ch { width: 133px; } .ci { width: 126px; } .cj { width: 16px; }
th { font-size: 9px; font-weight: 400; color: #5b5e62; background: #f8f9fb; border: solid #c6c8cb; border-width: 0 1px 1px 0; padding: 0; }
thead th { height: 20px; }
th.hot { background: #e7e7eb; }
th.corner { border: solid #b9babb; border-width: 0 4px 4px 0; }
td { padding: 0 0 1px 2.800px; border: solid #e3e3e4; border-width: 0 1px 1px 0; vertical-align: bottom; font: 11px/13.500px "Liberation Sans", Arial, sans-serif; letter-spacing: .05px; color: #000; white-space: nowrap; }
.titles td { font-weight: 700; }
.h17 { height: 17px; } .h18 { height: 18px; } .h32 { height: 32px; } .h45 { height: 45px; } .h57 { height: 57px; }
td.selected { position: relative; }
.selected::before { content: ""; position: absolute; inset: -1px; border: 2px solid #2463dc; }
.selected::after { content: ""; position: absolute; width: 5px; height: 5px; right: -2px; bottom: -2px; background: #2463dc; outline: 1px solid #fff; }

.vscroll { width: 9px; display: flex; flex-direction: column; }
.vhead { height: 20px; background: #f8f9fb; border-bottom: 1px solid #c6c8cb; }
.vthumb { width: 7px; height: 22px; margin: 1px 0 398px 1px; border-radius: 4px; background: #d9dadd; flex: none; }
.arrow { fill: #77797c; background: #fafafa; border: 1px solid #e4e4e6; display: flex; align-items: center; justify-content: center; }
.vscroll .arrow { height: 13px; }
.hscroll { height: 10px; flex: none; display: flex; align-items: center; }
.gut { width: 39px; height: 10px; background: #f8f9fb; border-right: 1px solid #dcdddf; }
.hthumb { width: 482px; height: 7px; margin: 0 621px 0 1px; border-radius: 4px; background: #d9dadc; }
.hscroll .arrow { width: 14px; height: 10px; }

.sheets { flex: 1; background: #f1f2f5; display: flex; align-items: center; padding-left: 42px; }
.sheets > svg:nth-child(2) { margin-left: 16px; }
.stab { align-self: stretch; width: 81px; margin-left: 19px; background: #fff; box-shadow: 0 0 2px #c5c6c8; display: flex; align-items: center; padding-left: 13.500px; gap: 7px; font-size: 12.5px; font-weight: 700; color: #188057; }
.stab .dd { color: #188057; width: 7px; }
.explore { margin: 1px 17px 0 auto; }

.side { width: 48px; border-left: 1px solid #dcdddf; display: flex; flex-direction: column; align-items: center; padding-top: 17px; gap: 32.500px; }
.side svg:first-child { font-family: Roboto, sans-serif; }
.side .expand { margin: auto 0 18px; }

.dockwrap { height: 31px; padding-left: 350px; }
.dock {
  width: 528px;
  height: 31px;
  padding-left: 14px;
  align-items: start;
  border-radius: 3px 3px 0 0;
  background: linear-gradient(90deg, #160f10, #17100f 20%, #3a2012 45%, #4a240e 55%, #1a1210 68%, #101010 80%, #0c0c0d);
  grid-template-columns: 24px 24px 24px 23.700px 23.800px 24px 24px 23.700px 24px 23.700px 24px 24px 23.700px 18.300px 16.600px 23.700px 24px 17.500px 17.500px 24px 23.700px 24px 0;
}
.dock > span { position: relative; height: 31px; padding-bottom: 4px; }
.dock svg { width: 20px; height: 20px; font-family: Roboto, sans-serif; }
.dock svg.lg { width: 22px; height: 22px; }
.dock .on::after { content: ""; position: absolute; width: 2px; height: 2px; border-radius: 50%; background: #c9c2bd; top: 27px; left: -1px; }
.dock em { position: absolute; left: 3px; top: 3px; min-width: 8px; height: 8px; border-radius: 4px; background: #f5372c; color: #fff; font: 6px/8px Roboto, sans-serif; text-align: center; }
.dsep { width: 1px; height: 22px; margin-top: 4px; background: #555; }

.watermark { position: absolute; left: 1072.500px; top: 650px; color: #b4b4b4; font-family: "Open Sans", "Noto Sans", sans-serif; white-space: nowrap; }
.watermark p { margin: 0; font-size: 18.500px; letter-spacing: .3px; line-height: 24px; }
.watermark p + p { font-size: 14px; letter-spacing: .2px; line-height: 21px; }
```
